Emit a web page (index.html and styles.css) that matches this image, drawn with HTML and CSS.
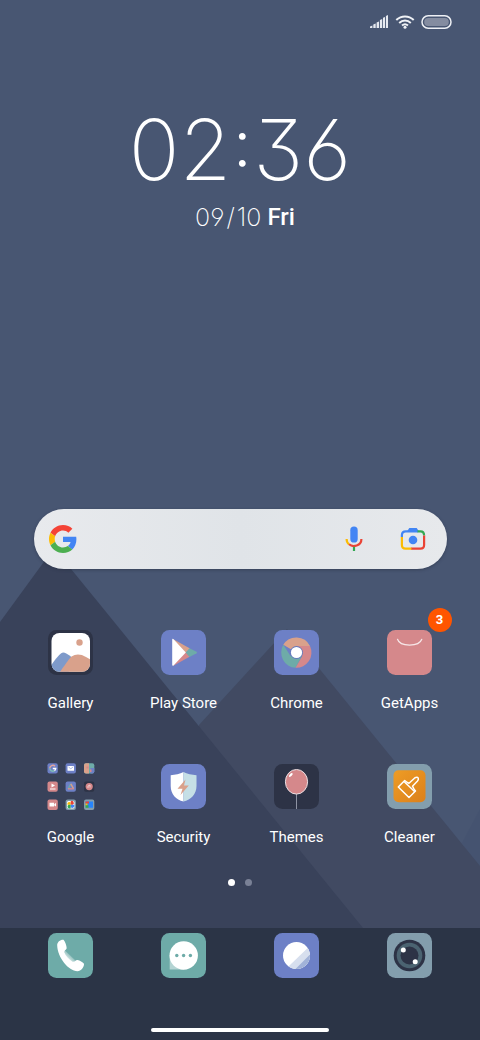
FILE: index.html
```html
<!DOCTYPE html>
<html lang="en">
<head>
<meta charset="utf-8">
<meta name="viewport" content="width=device-width, initial-scale=1">
<title>Home screen</title>
<link rel="stylesheet" href="styles.css">
</head>
<body>
<div class="screen">
  <svg class="wallpaper" viewBox="0 0 480 1040" preserveAspectRatio="none" aria-hidden="true">
    <path fill="#455370" d="M462 843 480 809V870Z"/>
    <path fill="#414a62" d="M199 725 287 629 480 866V928H199Z"/>
    <path fill="#39425a" d="M0 622 54 548 363 928H0Z"/>
  </svg>

  <header class="status">
    <svg width="20" height="14" viewBox="0 0 20 14" role="img" aria-label="Signal">
      <path fill="#e6e9f0" d="M1 11.500 3.400 10.500V13H1ZM4.300 9.500 6.700 8.500V13H4.300ZM7.600 7.500 10 6.500V13H7.600ZM10.900 5 13.200 4V13H10.900ZM14 2.800 16 2V13H14ZM16.900 1 19 0V13H16.900Z"/>
    </svg>
    <svg width="20" height="14" viewBox="0 0 20 14" role="img" aria-label="Wi-Fi">
      <g fill="none" stroke="#f0f2f6" stroke-width="2">
        <path d="M1.300 5C6.300 .2 13.700 .2 18.700 5"/>
        <path d="M4.200 8C7.600 4.800 12.400 4.800 15.800 8"/>
        <path d="M7 10.600C8.800 9 11.200 9 13 10.600"/>
      </g>
      <circle cx="10" cy="12.300" r="1.500" fill="#f0f2f6"/>
    </svg>
    <svg width="31" height="14" viewBox="0 0 31 14" role="img" aria-label="Battery">
      <rect x="1" y=".8" width="29" height="12.400" rx="6.200" fill="none" stroke="#eef0f5" stroke-width="1.500"/>
      <rect x="3.200" y="3" width="24.600" height="8" rx="4" fill="#848ca0"/>
    </svg>
  </header>

  <main class="home">
    <section class="clock">
      <div class="time"><span>02</span><span class="colon">:</span><span>36</span></div>
      <div class="date">
        <span class="day"><span>09</span><span>/</span><span>10</span></span>
        <span class="weekday">Fri</span>
      </div>
    </section>

    <form class="search">
      <button type="submit" aria-label="Google">
        <svg width="28" height="28" viewBox="0 0 48 48">
          <path fill="#f44336" d="M24 9.500c3.540 0 6.710 1.220 9.210 3.600l6.850-6.850C35.900 2.380 30.470 0 24 0 14.620 0 6.510 5.380 2.560 13.220l7.980 6.190C12.430 13.720 17.740 9.500 24 9.500z"/>
          <path fill="#4285f4" d="M46.980 24.550c0-1.570-.15-3.090-.38-4.550H24v9.020h12.940c-.58 2.960-2.260 5.480-4.780 7.180l7.730 6c4.510-4.180 7.090-10.360 7.090-17.650z"/>
          <path fill="#fbbc05" d="M10.530 28.590c-.48-1.450-.76-2.990-.76-4.590s.27-3.140.76-4.590l-7.980-6.190C.92 16.460 0 20.120 0 24s.92 7.540 2.560 10.780l7.970-6.190z"/>
          <path fill="#4caf50" d="M24 48c6.480 0 11.930-2.130 15.890-5.810l-7.730-6c-2.150 1.450-4.920 2.300-8.160 2.300-6.260 0-11.570-4.220-13.470-9.910l-7.980 6.190C6.510 42.620 14.620 48 24 48z"/>
        </svg>
      </button>
      <input type="text" aria-label="Search">
      <button type="button" aria-label="Voice search">
        <svg width="28" height="28" viewBox="0 0 28 28">
          <rect x="10.300" y="1.600" width="7.400" height="16" rx="3.700" fill="#4285f4"/>
          <g fill="none" stroke-width="2.200">
            <path stroke="#fbbc05" d="M6.600 14c0 2.600 1 4.200 2.500 5.300"/>
            <path stroke="#ea4335" d="M9.100 19.300c3.800 3.400 12.300 1.600 12.300-5.300"/>
            <path stroke="#34a853" d="M14 21.800V26"/>
          </g>
        </svg>
      </button>
      <button type="button" aria-label="Search with camera">
        <svg width="28" height="28" viewBox="0 0 28 28">
          <path fill="#4285f4" d="M8 6.500 10.300 3h7.400l2.300 3.500Z"/>
          <g fill="none" stroke-width="2.200">
            <path stroke="#4285f4" d="M2.900 12V10Q2.900 6.300 6.800 6.300H19"/>
            <path stroke="#34a853" d="M18.500 6.300H21.500Q25.100 6.300 25.100 10.500"/>
            <path stroke="#ea4335" d="M25.100 10.500V20Q25.100 23.600 21.500 23.600H12"/>
            <path stroke="#fbbc05" d="M2.900 12V20Q2.900 23.600 6.500 23.600H12.500"/>
          </g>
          <circle cx="14" cy="15" r="4.300" fill="#4285f4"/>
        </svg>
      </button>
    </form>

    <nav class="apps" aria-label="Apps">
      <a class="app" href="#gallery">
        <svg class="icon" viewBox="0 0 45 45">
          <rect width="45" height="45" rx="8.500" fill="#2d3346"/>
          <clipPath id="photo"><rect x="3.500" y="3" width="38.500" height="38.800" rx="8"/></clipPath>
          <g clip-path="url(#photo)">
            <path fill="#fff" d="M0 0H45V45H0Z"/>
            <path fill="#7e9aca" d="M0 40 4 34Q12 22.500 15 22.500T24 27.500L20 45H0Z"/>
            <path fill="#d9a18b" d="M10 45C14 39 20 30 23.500 26.500Q30 22.500 38 27L45 31V45Z"/>
            <circle cx="31.500" cy="12.500" r="3.200" fill="#d9a18b"/>
          </g>
        </svg>
        <span>Gallery</span>
      </a>
      <a class="app" href="#play-store">
        <svg class="icon" viewBox="0 0 45 45">
          <rect width="45" height="45" rx="8.500" fill="#6d80c6"/>
          <path fill="#d9a18b" d="M11.500 8.800 29 18.500 24.500 23Z"/>
          <path fill="#d5888b" d="M11.500 36.200 29 26.500 24.500 22Z"/>
          <path fill="#6eaba8" d="M28.500 18.200 35.500 21.700Q36.800 22.500 35.500 23.300L28.500 26.900 24.800 22.500Z"/>
          <path fill="#fff" d="M11.200 9.500Q11.500 8 12.800 9.500L24.800 22.500 12.800 35.300Q11.500 36.500 11.200 35Z"/>
        </svg>
        <span>Play Store</span>
      </a>
      <a class="app" href="#chrome">
        <svg class="icon" viewBox="0 0 45 45">
          <rect width="45" height="45" rx="8.500" fill="#6d80c6"/>
          <path fill="#d9a18b" d="M22.500 22.500 9.300 14.800A15.300 15.300 0 0 1 36 16H22.500Z"/>
          <path fill="#6eaba8" d="M9.300 14.800A15.300 15.300 0 0 0 21.500 37.800L28 26 22.500 22.500 16.500 26Z"/>
          <path fill="#d5888b" d="M36 16A15.300 15.300 0 0 1 21.500 37.800L28.300 26 22.500 16Z"/>
          <circle cx="22.500" cy="22.500" r="6.500" fill="#6379bd"/>
          <circle cx="22.500" cy="22.500" r="5.600" fill="#fff"/>
        </svg>
        <span>Chrome</span>
      </a>
      <a class="app" href="#getapps">
        <svg class="icon" viewBox="0 0 45 45">
          <rect width="45" height="45" rx="8.500" fill="#d5888b"/>
          <path fill="none" stroke="#f7e7e8" stroke-width="1.200" stroke-linecap="round" d="M10.500 9.300C13 17 32 17 34.800 9.300"/>
        </svg>
        <b class="badge">3</b>
        <span>GetApps</span>
      </a>

      <a class="app" href="#google">
        <svg class="icon" viewBox="0 0 45 45">
          <g fill="#6d80c6">
            <rect x="-.5" y="-.8" width="10.300" height="10.300" rx="2"/>
            <rect x="17.600" y="-.8" width="10.300" height="10.300" rx="2"/>
            <rect x="17.600" y="17.400" width="10.300" height="10.300" rx="2"/>
          </g>
          <g fill="#d5888b">
            <rect x="-.5" y="17.400" width="10.300" height="10.300" rx="2"/>
            <rect x="-.5" y="35.600" width="10.300" height="10.300" rx="2"/>
          </g>
          <rect x="36" y="17.400" width="10.300" height="10.300" rx="2" fill="#2d3346"/>
          <rect x="17.600" y="35.600" width="10.300" height="10.300" rx="2" fill="#839ead"/>
          <rect x="36" y="35.600" width="10.300" height="10.300" rx="2" fill="#839ead"/>
          <rect x="36" y="-.8" width="10.300" height="10.300" rx="2" fill="#6eaba8"/>
          <path fill="#d9a18b" d="M38-.8H41V9.500H38A2 2 0 0 1 36 7.500V1.200A2 2 0 0 1 38-.8Z"/>
          <path fill="#6d80c6" d="M42.500 4H46.300V7.500A2 2 0 0 1 44.300 9.500H42.500Z"/>
          <path fill="#d5888b" d="M38.500 2.500h2v2h-2zM42 5.500h1.500V8H42z"/>
          <g fill="none" stroke-width="1.400">
            <path stroke="#e6a59b" d="M7 2.300A3 3 0 0 0 1.800 4.300"/>
            <path stroke="#7fc0b5" d="M1.800 4.300A3 3 0 0 0 6.500 6.700"/>
            <path stroke="#fff" d="M4.800 4.500H7.700Q7.500 6 6.500 6.700"/>
          </g>
          <rect x="19.500" y="2" width="6.500" height="4.800" rx=".6" fill="#fff"/>
          <path fill="none" stroke="#8da0d6" stroke-width=".7" d="M20.500 3 22.800 4.800 25 3"/>
          <path fill="#fff" d="M3.500 19.500 7 21.500 3.500 23.500ZM2 24.500H7.500V25.500H2Z"/>
          <path fill="none" stroke="#6eaba8" stroke-width="1.400" d="M22.800 19.800 20 24.800"/>
          <path fill="none" stroke="#d9a18b" stroke-width="1.400" d="M22.800 19.800 25.600 24.800"/>
          <path fill="none" stroke="#d5888b" stroke-width="1.400" d="M20 24.800H25.600"/>
          <circle cx="41.200" cy="22.600" r="3.600" fill="#d5888b"/>
          <path fill="none" stroke="#f4d9da" stroke-width=".8" d="M40 24V22L42 21V23.500"/>
          <path fill="#fff" d="M1.500 38.800H6V42.600H1.500ZM6.300 40 8 39V42.500L6.300 41.500Z"/>
          <rect x="19" y="37" width="7.500" height="7.500" rx="1.500" fill="#fff"/>
          <path fill="#fbbc05" d="M19.500 40.700A2 2 0 0 1 22.700 38.500V40.700Z"/>
          <path fill="#ea4335" d="M22.700 37.300A2 2 0 0 1 24.900 40.700H22.700Z"/>
          <path fill="#4285f4" d="M26.100 40.700A2 2 0 0 1 22.700 42.900V40.700Z"/>
          <path fill="#34a853" d="M22.700 44.200A2 2 0 0 1 20.500 40.700H22.700Z"/>
          <path fill="#2684fc" d="M37.500 37.500H45V43.800H40.500L37.500 41Z"/>
          <path fill="#ea4335" d="M37.500 37.500H41V39.500H37.500Z"/>
          <path fill="#34a853" d="M37.500 41.200H40.500V43.800H37.500Z"/>
          <path fill="#fbbc05" d="M37.500 39.500H39.500V41.200H37.500Z"/>
        </svg>
        <span>Google</span>
      </a>
      <a class="app" href="#security">
        <svg class="icon" viewBox="0 0 45 45">
          <rect width="45" height="45" rx="8.500" fill="#6d80c6"/>
          <path fill="#fff" d="M22.500 8C19 10 14 10.800 9.700 11.200V22C9.700 30 15 36 22.500 37.500Z"/>
          <path fill="#c5dfe6" d="M22.500 8C26 10 31 10.800 35.500 11.200V22C35.500 30 30 36 22.500 37.500Z"/>
          <path fill="#d9a18b" d="M24.500 15.500 16.500 24.800H21.500L19.500 31 27.800 21.500H23Z"/>
        </svg>
        <span>Security</span>
      </a>
      <a class="app" href="#themes">
        <svg class="icon" viewBox="0 0 45 45">
          <rect width="45" height="45" rx="8.500" fill="#2d3346"/>
          <path stroke="#8e93a3" stroke-width="1" d="M22.500 30V45"/>
          <ellipse cx="22.500" cy="17.800" rx="11.100" ry="12.300" fill="#d5888b" stroke="#eadfe2"/>
          <ellipse cx="16.800" cy="11" rx="2.400" ry="1.200" fill="#fff" transform="rotate(-45 16.800 11)"/>
        </svg>
        <span>Themes</span>
      </a>
      <a class="app" href="#cleaner">
        <svg class="icon" viewBox="0 0 45 45">
          <defs><linearGradient id="amber" x2="1" y2="1"><stop stop-color="#ee9c25"/><stop offset="1" stop-color="#db801b"/></linearGradient></defs>
          <rect width="45" height="45" rx="8.500" fill="#839ead"/>
          <rect x="6.500" y="6.200" width="32" height="32" rx="5" fill="url(#amber)"/>
          <g fill="none" stroke="#fff" stroke-width="1.500" stroke-linejoin="round">
            <path d="M17.700 16.500 20.300 18.500 22 19.200 28 13.700Q30.500 12.500 31.300 14.300 31.800 15.500 30.500 17L25.500 22.200 27.200 25.500 28.500 27 22 33.500 11.300 23Z"/>
            <path d="M17 17.500 27.800 27.700"/>
          </g>
        </svg>
        <span>Cleaner</span>
      </a>
    </nav>

    <div class="pages"><i class="dot current"></i><i class="dot"></i></div>
  </main>

  <footer class="dock">
    <nav class="dock-apps" aria-label="Dock">
      <a href="#phone" aria-label="Phone">
        <svg class="icon" viewBox="0 0 45 45">
          <defs><linearGradient id="fade" gradientUnits="userSpaceOnUse" x1="17" y1="26" x2="23" y2="20"><stop stop-color="#fff"/><stop offset="1" stop-color="#fff" stop-opacity="0"/></linearGradient></defs>
          <rect width="45" height="45" rx="8.500" fill="#6eaba8"/>
          <path fill="url(#fade)" d="M16.500 17 27.500 27.500 22 32 12 22Z"/>
          <path fill="#fff" d="M9.200 12.500C9 9 12.500 6.500 15.500 6.800 17.300 9 18.500 12.500 18.700 15.200 18 17 16 17.500 16.200 19.300 17.500 23 21 26.500 24.500 28.800 26.500 29.300 27.500 26.800 29.500 27 32 27.500 34.500 29 36 30.700 36.300 34 33 38 29.500 38.200 20.500 38 9.500 24.500 9.200 12.500Z"/>
        </svg>
      </a>
      <a href="#messages" aria-label="Messages">
        <svg class="icon" viewBox="0 0 45 45">
          <rect width="45" height="45" rx="8.500" fill="#6eaba8"/>
          <path fill="#b4d4d3" d="M8.700 22V36.500H23Z"/>
          <circle cx="22.700" cy="22.500" r="14.200" fill="#fff"/>
          <g fill="#6eaba8"><circle cx="15.800" cy="22.500" r="1.700"/><circle cx="22.600" cy="22.500" r="1.700"/><circle cx="29.400" cy="22.500" r="1.700"/></g>
        </svg>
      </a>
      <a href="#browser" aria-label="Browser">
        <svg class="icon" viewBox="0 0 45 45">
          <rect width="45" height="45" rx="8.500" fill="#6d80c6"/>
          <clipPath id="globe"><circle cx="22.500" cy="22.500" r="13.500"/></clipPath>
          <g clip-path="url(#globe)">
            <path fill="#fff" d="M0 0H45V45H0Z"/>
            <path fill="#d7dfee" d="M45 4V45H2.500Z"/>
            <path fill="#a1b2d8" d="M45 12.500V45H12.500Z"/>
          </g>
        </svg>
      </a>
      <a href="#camera" aria-label="Camera">
        <svg class="icon" viewBox="0 0 45 45">
          <rect width="45" height="45" rx="8.500" fill="#839ead"/>
          <circle cx="22.500" cy="22.500" r="15.800" fill="#2d3346"/>
          <circle cx="22.500" cy="22.500" r="12.800" fill="#4b6371"/>
          <circle cx="22.500" cy="22.500" r="9" fill="#2d3346"/>
          <circle cx="16.300" cy="17" r="2.500" fill="#fff"/>
          <circle cx="28.200" cy="28.800" r="2.500" fill="#fff"/>
        </svg>
      </a>
    </nav>
    <div class="home-bar"></div>
  </footer>
</div>
</body>
</html>
```
FILE: styles.css
```css
* { box-sizing: border-box; }

body {
  margin: 0;
  background: #485672;
  color: #fff;
  font-family: Roboto, "Noto Sans", sans-serif;
}

.screen {
  position: relative;
  isolation: isolate;
  display: flex;
  flex-direction: column;
  min-height: 100vh;
}

.wallpaper {
  position: absolute;
  inset: 0;
  z-index: -1;
  width: 100%;
  height: 100%;
}

.status {
  display: flex;
  justify-content: flex-end;
  align-items: center;
  gap: 6px;
  padding: 15px 28px 0;
}

.home {
  flex: 1;
  display: flex;
  flex-direction: column;
}

.clock {
  display: flex;
  flex-direction: column;
  align-items: center;
  padding-top: 77px;
  font-family: Inter, Roboto, sans-serif;
  font-feature-settings: "cv03", "cv04", "cv09";
}

.time {
  display: flex;
  align-items: center;
  font-size: 84px;
  font-weight: 180;
  line-height: 88px;
}

.colon {
  width: 22px;
  font-size: 64px;
  font-weight: 300;
  font-feature-settings: "case";
  text-align: center;
}

.date {
  display: flex;
  align-items: center;
  gap: 6px;
  padding: 9px 0 0 10px;
  line-height: 28px;
}

.day {
  display: flex;
  gap: 2px;
  font-size: 25px;
  font-weight: 200;
}

.weekday {
  font-family: Roboto, sans-serif;
  font-size: 24px;
  font-weight: 500;
}

.search {
  display: flex;
  align-items: center;
  height: 60px;
  margin: auto 33px 61px 34px;
  padding: 0 20px 0 15px;
  border-radius: 30px;
  background: linear-gradient(90deg, #e8eaed, #e0e4e8 50%, #e7e9ec);
  box-shadow: 0 1px 3px #252d4080;
}

.search input {
  flex: 1;
  min-width: 0;
  height: 40px;
  border: 0;
  outline: 0;
  background: none;
  font: 16px Roboto, sans-serif;
}

.search button {
  display: flex;
  padding: 0;
  border: 0;
  background: none;
}

.search button + button { margin-left: 31px; }

.apps {
  display: grid;
  grid-template-columns: repeat(4, 1fr);
  row-gap: 51px;
  padding: 0 14px;
}

.app {
  position: relative;
  display: flex;
  flex-direction: column;
  align-items: center;
  gap: 18px;
  color: #fff;
  font-size: 15px;
  line-height: 20px;
  text-decoration: none;
}

.icon {
  display: block;
  width: 45px;
  height: 45px;
  overflow: visible;
}

.badge {
  position: absolute;
  top: -22px;
  left: calc(50% + 18px);
  width: 24px;
  border-radius: 12px;
  background: #ff5500;
  font-size: 13px;
  line-height: 24px;
  text-align: center;
}

.pages {
  display: flex;
  justify-content: center;
  gap: 10px;
  padding: 32px 0 42px;
}

.dot {
  width: 7px;
  height: 7px;
  border-radius: 50%;
  background: #7a8196;
}

.current { background: #fff; }

.dock {
  display: flex;
  flex-direction: column;
  align-items: center;
  gap: 50px;
  padding: 5px 0 8px;
  background: #2b3446;
}

.dock-apps {
  display: grid;
  grid-template-columns: repeat(4, 1fr);
  justify-items: center;
  width: 100%;
  padding: 0 14px;
}

.home-bar {
  width: 37%;
  height: 4px;
  border-radius: 2px;
  background: #fff;
}
```
